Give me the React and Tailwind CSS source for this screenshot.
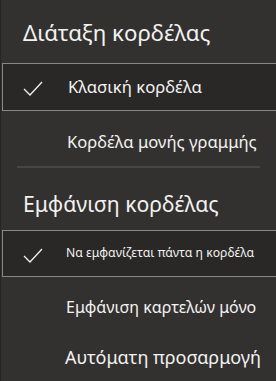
import React from 'react';

const font = { fontFamily: '"Noto Sans", "Open Sans", sans-serif' };

function Check() {
    return (
        <svg width="20" height="15" viewBox="0 0 20 15" className="absolute left-[20px] top-[17px]">
            <polyline points="1,8 7,14 19,1" fill="none" stroke="#f3f2f1" strokeWidth="1.3" />
        </svg>
    );
}

export default function App() {
    return (
        <div className="flex h-[381px] w-[276px] flex-col overflow-hidden border-l border-[#252423] bg-[#323130] text-[#f3f2f1]" style={font}>
            <div className="flex h-[63px] items-center pl-[22px] pt-[4px] text-[22.3px] leading-none">Διάταξη κορδέλας</div>

            <div className="relative ml-[1px] flex h-[48px] w-[290px] items-center border border-[#8a8886] bg-[#292827] pl-[65px] text-[16.7px]">
                <Check />
                Κλασική κορδέλα
            </div>

            <div className="mt-[8px] flex h-[46px] items-center pl-[66px] text-[16.6px]">Κορδέλα μονής γραμμής</div>
            <div className="mx-[16px] mt-[1px] h-[2px] bg-[#484644]" />

            <div className="flex h-[62px] items-center pl-[22px] pt-[10px] text-[21.2px] leading-none">Εμφάνιση κορδέλας</div>

            <div className="relative ml-[1px] flex h-[47px] w-[290px] items-center border border-[#8a8886] bg-[#292827] pl-[63px] text-[12.2px]">
                <Check />
                Να εμφανίζεται πάντα η κορδέλα
            </div>

            <div className="flex h-[60px] items-center pl-[65px] text-[16px]">Εμφάνιση καρτελών μόνο</div>
            <div className="flex h-[40px] items-center pl-[64px] text-[18px]">Αυτόματη προσαρμογή</div>
        </div>
    );
}
